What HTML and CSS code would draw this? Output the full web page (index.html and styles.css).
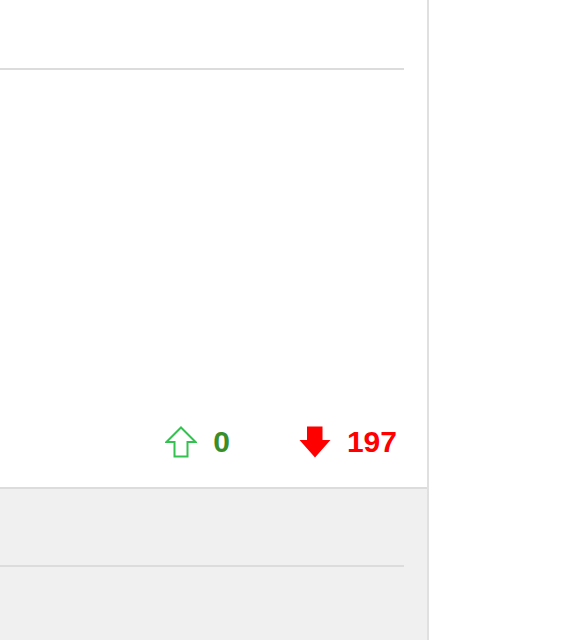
FILE: index.html
```html
<!DOCTYPE html>
<html lang="en">
<head>
  <meta charset="UTF-8" />
  <title>Votes</title>
  <link rel="stylesheet" href="styles.css">
</head>
<body>
  <div class="panel">
    <div class="post-head"></div>

    <div class="post-body">
      <div class="votes">
        <div class="vote vote-up">
          <svg width="32" height="32" viewBox="0 0 32 32">
            <path d="M16 1.5 L30.5 16 L22.5 16 L22.5 30.5 L9.5 30.5 L9.5 16 L1.5 16 Z" fill="none" stroke="#33c24f" stroke-width="2" stroke-linejoin="miter"/>
          </svg>
          <span class="count">0</span>
        </div>
        <div class="vote vote-down">
          <svg width="32" height="32" viewBox="0 0 32 32">
            <path d="M8 0.5 L23.5 0.5 L23.5 14 L31.5 14 L16 31.5 L0.5 14 L8 14 Z" fill="#ff0000"/>
          </svg>
          <span class="count">197</span>
        </div>
      </div>
    </div>

    <div class="post-foot">
      <div class="foot-row"></div>
    </div>
  </div>
</body>
</html>
```

FILE: styles.css
```css
body {
  margin: 0;
  background: #fff;
  font-family: "Liberation Sans", Arial, sans-serif;
}

.panel {
  width: 427px;
  min-height: 640px;
  border-right: 2px solid #e0e0e0;
  background: #fff;
  display: flex;
  flex-direction: column;
}

.post-head {
  height: 68px;
  margin-right: 23px;
  border-bottom: 2px solid #dcdcdc;
}

.post-body {
  height: 417px;
  display: flex;
  flex-direction: column;
  justify-content: flex-end;
}

.votes {
  display: flex;
  justify-content: flex-end;
  align-items: center;
  gap: 69px;
  padding-right: 30px;
  margin-bottom: 29px;
}

.vote {
  display: flex;
  align-items: center;
  gap: 16px;
}

.vote svg {
  display: block;
}

.count {
  font-size: 30px;
  font-weight: bold;
  line-height: 32px;
}

.vote-up .count {
  color: #3a8e28;
}

.vote-down .count {
  color: #ff0000;
}

.post-foot {
  flex: 1;
  border-top: 2px solid #dcdcdc;
  background: #f0f0f0;
}

.foot-row {
  height: 76px;
  margin-right: 23px;
  border-bottom: 2px solid #dcdcdc;
}
```
